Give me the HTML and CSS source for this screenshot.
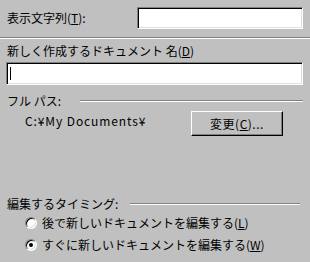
FILE: index.html
```html
<!DOCTYPE html>
<html lang="ja">
<head>
<meta charset="utf-8">
<link rel="stylesheet" href="styles.css">
</head>
<body>
<div class="dlg">
  <div class="row1">
    <span class="lbl">表示文字列(<u>T</u>):</span>
    <div class="field f1"></div>
  </div>
  <div class="sep"></div>
  <div class="lbl2">新しく作成するドキュメント 名(<u>D</u>)</div>
  <div class="field f2"><span class="caret"></span></div>
  <div class="grp">
    <span class="glbl w1">フル パス:</span>
    <span class="gline r1"></span>
  </div>
  <div class="pathrow">
    <span class="path">C:¥My Documents¥</span>
    <div class="btn">変更(<u>C</u>)...</div>
  </div>
  <div class="grp g2">
    <span class="glbl w2">編集するタイミング:</span>
    <span class="gline r2"></span>
  </div>
  <div class="radio first"><span class="rb"></span><span>後で新しいドキュメントを編集する(<u>L</u>)</span></div>
  <div class="radio"><span class="rb on"></span><span>すぐに新しいドキュメントを編集する(<u>W</u>)</span></div>
</div>
</body>
</html>
```
FILE: styles.css
```css
html, body {
  margin: 0;
  padding: 0;
  background: #c0c0c0;
}
body {
  width: 310px;
  height: 262px;
  overflow: hidden;
  font-family: "Noto Sans CJK JP", "Noto Sans", sans-serif;
  font-size: 12px;
  line-height: 14px;
  color: #000;
}
u { text-decoration: underline; text-underline-offset: 1px; }
.dlg { display: flex; flex-direction: column; }
.row1 {
  height: 36px;
  display: flex;
  align-items: center;
  padding: 0 7px;
}
.field {
  box-sizing: border-box;
  background: #fff;
  border: 1px solid;
  border-color: #808080 #fff #fff #808080;
  box-shadow: inset 1px 1px 0 #000, inset -1px -1px 0 #dfdfdf;
  position: relative;
}
.f1 { margin-left: auto; width: 166px; height: 22px; }
.f2 { margin: 4px 0 0 6px; width: 297px; height: 23px; }
.caret {
  position: absolute;
  left: 3px;
  top: 4px;
  width: 1px;
  height: 13px;
  background: #000;
}
.sep {
  margin-top: 1px;
  border-top: 1px solid #808080;
  border-bottom: 1px solid #fff;
}
.lbl2 { margin: 5px 0 0 7px; }
.grp {
  display: flex;
  align-items: center;
  margin-top: 9px;
  padding-left: 7px;
}
.glbl { flex: none; }
.w1 { width: 73px; }
.w2 { width: 123px; }
.gline {
  flex: 1;
  border-top: 1px solid #808080;
  border-bottom: 1px solid #fff;
}
.r1 { margin-right: 7px; }
.r2 { margin-right: 10px; }
.pathrow {
  display: flex;
  align-items: flex-start;
  margin-top: 3px;
  padding-left: 25px;
}
.path { margin-top: 3px; letter-spacing: 0.9px; }
.btn {
  box-sizing: border-box;
  margin-left: auto;
  margin-right: 27px;
  width: 92px;
  height: 25px;
  border: 1px solid;
  border-color: #fff #000 #000 #fff;
  box-shadow: inset -1px -1px 0 #808080;
  display: flex;
  align-items: center;
  justify-content: center;
  padding-top: 1px;
  letter-spacing: 0.5px;
}
.g2 { margin-top: 61px; }
.radio {
  display: flex;
  align-items: center;
  gap: 5px;
  height: 22px;
  padding-left: 25px;
}
.radio.first { margin-top: 1px; }
.rb {
  box-sizing: border-box;
  width: 12px;
  height: 12px;
  border-radius: 50%;
  border: 1px solid;
  border-color: #808080 #fff #fff #808080;
  box-shadow: inset 1px 1px 0 #000, inset -1px -1px 0 #dfdfdf;
  background: #fff;
  position: relative;
  flex: none;
}
.rb.on::after {
  content: "";
  position: absolute;
  left: 3px;
  top: 3px;
  width: 4px;
  height: 4px;
  border-radius: 50%;
  background: #000;
}
```
